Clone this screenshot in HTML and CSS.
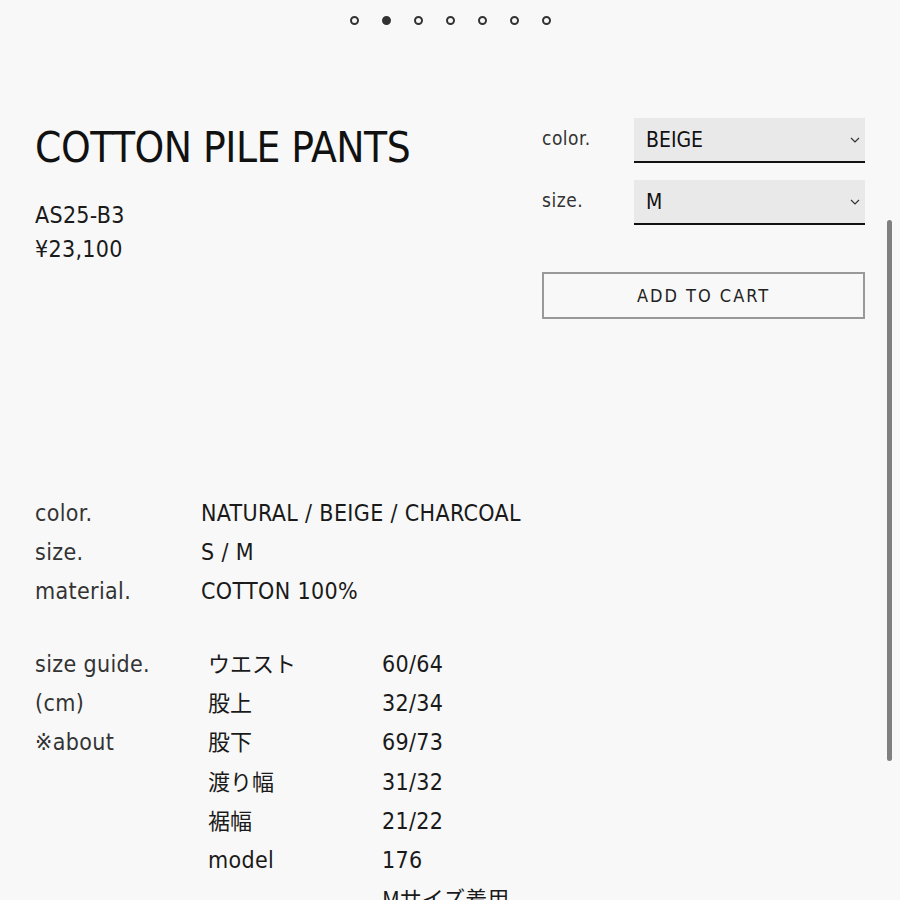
FILE: index.html
```html
<!DOCTYPE html>
<html lang="ja">
<head>
    <meta charset="UTF-8">
    <meta name="viewport" content="width=device-width, initial-scale=1.0">
    <title>COTTON PILE PANTS</title>
    <link rel="stylesheet" href="styles.css">
</head>
<body>
    <div class="dots">
        <span class="dot"></span>
        <span class="dot active"></span>
        <span class="dot"></span>
        <span class="dot"></span>
        <span class="dot"></span>
        <span class="dot"></span>
        <span class="dot"></span>
    </div>

    <div class="producto">
        <div class="info">
            <h1 class="titulo">COTTON PILE PANTS</h1>
            <p class="codigo">AS25-B3</p>
            <p class="precio">¥23,100</p>
        </div>

        <div class="compra">
            <div class="campo">
                <label for="color">color.</label>
                <div class="select-box">
                    <select id="color">
                        <option>NATURAL</option>
                        <option selected>BEIGE</option>
                        <option>CHARCOAL</option>
                    </select>
                    <svg class="flecha" width="10" height="6" viewBox="0 0 10 6"><path d="M1 1l4 4 4-4" fill="none" stroke="#333" stroke-width="1.2"/></svg>
                </div>
            </div>
            <div class="campo">
                <label for="talla">size.</label>
                <div class="select-box">
                    <select id="talla">
                        <option>S</option>
                        <option selected>M</option>
                    </select>
                    <svg class="flecha" width="10" height="6" viewBox="0 0 10 6"><path d="M1 1l4 4 4-4" fill="none" stroke="#333" stroke-width="1.2"/></svg>
                </div>
            </div>
            <button class="btn-cart" type="button">ADD TO CART</button>
        </div>
    </div>

    <div class="detalle">
        <span>color.</span><span>NATURAL / BEIGE / CHARCOAL</span>
        <span>size.</span><span>S / M</span>
        <span>material.</span><span>COTTON 100%</span>
    </div>

    <div class="guia">
        <div class="guia-label">
            <span>size guide.</span>
            <span>(cm)</span>
            <span>※about</span>
        </div>
        <div class="guia-tabla">
            <span class="jp">ウエスト</span><span>60/64</span>
            <span class="jp">股上</span><span>32/34</span>
            <span class="jp">股下</span><span>69/73</span>
            <span class="jp">渡り幅</span><span>31/32</span>
            <span class="jp">裾幅</span><span>21/22</span>
            <span>model</span><span>176</span>
            <span></span><span class="jp">Mサイズ着用</span>
        </div>
    </div>

    <div class="scroll"></div>
</body>
</html>
```

FILE: styles.css
```css
html, body{
    overflow: hidden;
    height: 100%;
}
body{
    margin: 0;
    background-color: #f8f8f8;
    color: #1a1a1a;
    font-family: "Liberation Sans Narrow", "DejaVu Sans Condensed", "Noto Sans CJK JP", sans-serif;
    position: relative;
}
.dots{
    display: flex;
    justify-content: center;
    gap: 23px;
    padding-top: 16px;
}
.dot{
    width: 5px;
    height: 5px;
    border: 2px solid #333;
    border-radius: 50%;
}
.dot.active{
    background-color: #333;
}

.producto{
    display: flex;
    justify-content: space-between;
    align-items: flex-start;
    padding: 0 35px;
    margin-top: 97px;
}
.titulo{
    margin: 0;
    font-weight: normal;
    font-size: 42px;
    letter-spacing: -0.5px;
    line-height: 52px;
    color: #111;
}
.codigo, .precio{
    margin: 0;
    font-size: 23px;
    letter-spacing: 0.3px;
    line-height: 34px;
}
.codigo{
    margin-top: 24px;
}

.compra{
    width: 323px;
    margin-top: -4px;
}
.campo{
    display: flex;
    align-items: flex-start;
    margin-bottom: 17px;
}
.campo label{
    width: 92px;
    font-size: 19px;
    letter-spacing: 0.5px;
    line-height: 40px;
    color: #333;
}
.select-box{
    position: relative;
    flex: 1;
}
.select-box select{
    appearance: none;
    -webkit-appearance: none;
    display: block;
    width: 100%;
    height: 45px;
    border: none;
    border-bottom: 2px solid #111;
    border-radius: 0;
    background-color: #e9e9e9;
    padding: 0 12px;
    font-family: inherit;
    font-size: 21px;
    color: #111;
}
.flecha{
    position: absolute;
    right: 5px;
    top: 19px;
}
.btn-cart{
    display: block;
    width: 100%;
    height: 47px;
    margin-top: 47px;
    background-color: #f8f8f8;
    border: 2px solid #999;
    font-family: inherit;
    font-size: 18px;
    letter-spacing: 2px;
    color: #222;
}

.detalle{
    display: grid;
    grid-template-columns: 166px 1fr;
    padding: 0 35px;
    margin-top: 175px;
    font-size: 23px;
    letter-spacing: 0.35px;
    line-height: 39px;
}
.detalle span:nth-child(odd){
    color: #333;
}

.guia{
    display: flex;
    padding: 0 35px;
    margin-top: 34px;
    font-size: 23px;
    letter-spacing: 0.35px;
    line-height: 39.2px;
}
.guia-label{
    display: flex;
    flex-direction: column;
    width: 173px;
    color: #333;
}
.guia-tabla{
    display: grid;
    grid-template-columns: 174px 1fr;
}
.jp{
    font-family: "Noto Sans CJK JP", sans-serif;
    font-size: 22px;
    letter-spacing: 0;
    line-height: 35px;
}

.scroll{
    position: absolute;
    right: 8px;
    top: 220px;
    width: 5px;
    height: 541px;
    border-radius: 3px;
    background-color: #808080;
}
```
